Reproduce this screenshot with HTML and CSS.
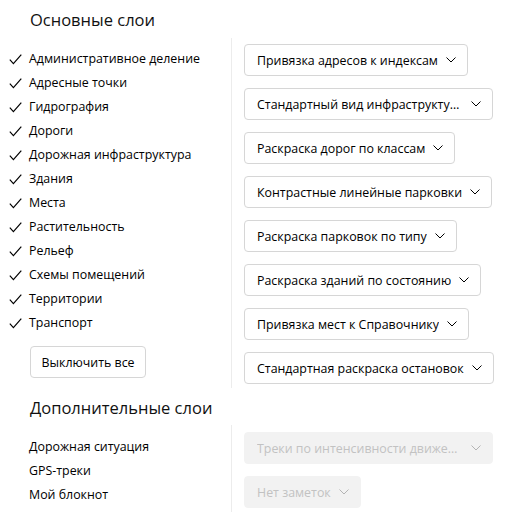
FILE: index.html
```html
<!DOCTYPE html>
<html lang="ru">
  <head>
    <meta charset="UTF-8" />
    <title>Слои</title>
    <link rel="stylesheet" href="styles.css">
  </head>
  <body>
    <h2 class="section-title">Основные слои</h2>
    <div class="layers">
      <div class="layer-list">
        <div class="layer checked">Административное деление</div>
        <div class="layer checked">Адресные точки</div>
        <div class="layer checked">Гидрография</div>
        <div class="layer checked">Дороги</div>
        <div class="layer checked">Дорожная инфраструктура</div>
        <div class="layer checked">Здания</div>
        <div class="layer checked">Места</div>
        <div class="layer checked">Растительность</div>
        <div class="layer checked">Рельеф</div>
        <div class="layer checked">Схемы помещений</div>
        <div class="layer checked">Территории</div>
        <div class="layer checked">Транспорт</div>
        <button class="btn-off">Выключить все</button>
      </div>
      <div class="options">
        <button class="select"><span class="label">Привязка адресов к индексам</span><span class="arrow"></span></button>
        <button class="select wide"><span class="label">Стандартный вид инфраструктуры дорог</span><span class="arrow"></span></button>
        <button class="select"><span class="label">Раскраска дорог по классам</span><span class="arrow"></span></button>
        <button class="select"><span class="label">Контрастные линейные парковки</span><span class="arrow"></span></button>
        <button class="select"><span class="label">Раскраска парковок по типу</span><span class="arrow"></span></button>
        <button class="select"><span class="label">Раскраска зданий по состоянию</span><span class="arrow"></span></button>
        <button class="select"><span class="label">Привязка мест к Справочнику</span><span class="arrow"></span></button>
        <button class="select"><span class="label">Стандартная раскраска остановок</span><span class="arrow"></span></button>
      </div>
    </div>

    <h2 class="section-title extra-title">Дополнительные слои</h2>
    <div class="layers extra">
      <div class="layer-list">
        <div class="layer">Дорожная ситуация</div>
        <div class="layer">GPS-треки</div>
        <div class="layer">Мой блокнот</div>
      </div>
      <div class="options">
        <button class="select wide" disabled><span class="label">Треки по интенсивности движения</span><span class="arrow"></span></button>
        <button class="select" disabled><span class="label">Нет заметок</span><span class="arrow"></span></button>
      </div>
    </div>
  </body>
</html>
```

FILE: styles.css
```css
body {
  margin: 0;
  font-family: "Open Sans", Roboto, sans-serif;
  font-size: 12.4px;
  color: #000;
  background: #fff;
  width: 511px;
}

.section-title {
  margin: 8px 0 6px 30px;
  font-size: 16.5px;
  font-weight: normal;
  line-height: 24px;
  color: #111;
}

.extra-title {
  margin-top: 8px;
  margin-bottom: 5px;
}

.layers {
  display: grid;
  grid-template-columns: 231px auto;
}

.layer-list {
  padding: 9px 0 0 8px;
}

.layer {
  height: 24px;
  line-height: 24px;
  padding-left: 21px;
  position: relative;
  white-space: nowrap;
}

.layer.checked::before {
  content: "";
  position: absolute;
  left: 1px;
  top: 7px;
  width: 13px;
  height: 11px;
  background: url("data:image/svg+xml;utf8,<svg xmlns='http://www.w3.org/2000/svg' width='13' height='11' viewBox='0 0 13 11'><path d='M0.8 5.6 L4.4 9.6 L12.3 0.6' fill='none' stroke='%23000' stroke-width='1.2'/></svg>") no-repeat;
}

.btn-off {
  margin: 11px 0 0 22px;
  height: 32px;
  width: 116px;
  padding: 0;
  font: inherit;
  color: #000;
  background: #fff;
  border: 1px solid #d6d6d6;
  border-radius: 4px;
}

.options {
  border-left: 1px solid #ececec;
  padding: 6px 0 4px 12px;
  display: flex;
  flex-direction: column;
  align-items: flex-start;
  gap: 12px;
}

.extra .options {
  padding-top: 7px;
  gap: 12px;
}

.extra .layer-list {
  padding-top: 10px;
}

.select {
  display: flex;
  align-items: center;
  height: 32px;
  padding: 0 11px 0 12px;
  gap: 8px;
  font: inherit;
  color: #000;
  background: #fff;
  border: 1px solid #d6d6d6;
  border-radius: 4px;
  white-space: nowrap;
}

.select.wide {
  width: 249px;
}

.select .label {
  overflow: hidden;
  text-overflow: ellipsis;
  flex: 1;
  text-align: left;
}

.arrow {
  width: 10px;
  height: 6px;
  flex: none;
  background: url("data:image/svg+xml;utf8,<svg xmlns='http://www.w3.org/2000/svg' width='10' height='6' viewBox='0 0 10 6'><path d='M0.5 0.5 L5 5 L9.5 0.5' fill='none' stroke='%23000' stroke-width='1'/></svg>") no-repeat;
}

.select:disabled {
  background: #f2f2f2;
  border-color: #f2f2f2;
  color: #c2c2c2;
}

.select:disabled .arrow {
  opacity: 0.25;
}
```
